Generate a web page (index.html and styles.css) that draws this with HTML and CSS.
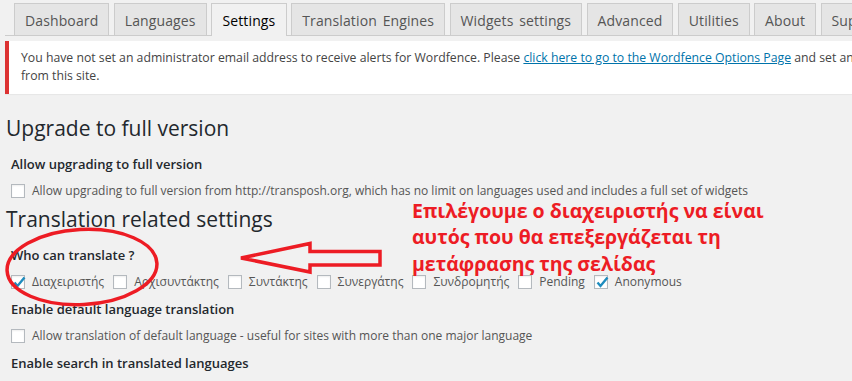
FILE: index.html
```html
<!DOCTYPE html>
<html lang="el">
<head>
    <meta charset="UTF-8">
    <meta name="viewport" content="width=device-width, initial-scale=1.0">
    <title>Transposh - Settings</title>
    <link rel="stylesheet" href="styles.css">
</head>
<body>
    <div class="wrap">
        <nav class="nav-tabs">
            <a class="nav-tab" href="#">Dashboard</a>
            <a class="nav-tab" href="#">Languages</a>
            <a class="nav-tab active" href="#">Settings</a>
            <a class="nav-tab" href="#">Translation Engines</a>
            <a class="nav-tab" href="#">Widgets settings</a>
            <a class="nav-tab" href="#">Advanced</a>
            <a class="nav-tab" href="#">Utilities</a>
            <a class="nav-tab" href="#">About</a>
            <a class="nav-tab" href="#">Support</a>
        </nav>

        <div class="notice">
            <p>You have not set an administrator email address to receive alerts for Wordfence. Please <a href="#">click here to go to the Wordfence Options Page</a> and set an email address where you will receive security alerts<br>from this site.</p>
        </div>

        <h2>Upgrade to full version</h2>
        <div class="field-title">Allow upgrading to full version</div>
        <div class="option-row">
            <label class="option"><span class="box"></span><span>Allow upgrading to full version from http://transposh.org, which has no limit on languages used and includes a full set of widgets</span></label>
        </div>

        <h2>Translation related settings</h2>
        <div class="field-title">Who can translate ?</div>
        <div class="option-row">
            <label class="option"><span class="box"><svg viewBox="0 0 14 14"><path d="M2.5 6.5L5.5 10L12.5 1.5"/></svg></span><span>Διαχειριστής</span></label>
            <label class="option"><span class="box"></span><span>Αρχισυντάκτης</span></label>
            <label class="option"><span class="box"></span><span>Συντάκτης</span></label>
            <label class="option"><span class="box"></span><span>Συνεργάτης</span></label>
            <label class="option"><span class="box"></span><span>Συνδρομητής</span></label>
            <label class="option"><span class="box"></span><span>Pending</span></label>
            <label class="option"><span class="box"><svg viewBox="0 0 14 14"><path d="M2.5 6.5L5.5 10L12.5 1.5"/></svg></span><span>Anonymous</span></label>
        </div>
        <div class="field-title">Enable default language translation</div>
        <div class="option-row">
            <label class="option"><span class="box"></span><span>Allow translation of default language - useful for sites with more than one major language</span></label>
        </div>
        <div class="field-title">Enable search in translated languages</div>
    </div>

    <!-- hand-drawn annotation on top of the screenshot -->
    <div class="annotation">
        Επιλέγουμε ο διαχειριστής να είναι<br>
        αυτός που θα επεξεργάζεται τη<br>
        μετάφρασης της σελίδας
    </div>

    <svg class="marks" width="852" height="381" viewBox="0 0 852 381">
        <ellipse cx="82" cy="267" rx="75" ry="37.5" transform="rotate(-3 82 267)"/>
        <polygon points="241,258 310,243.5 310,251.5 380,251.5 380,265 310,265 310,272"/>
    </svg>
</body>
</html>
```

FILE: styles.css
```css
html, body {
    overflow: hidden;
}
body {
    margin: 0;
    background: #f1f1f1;
    font-family: "Open Sans", "Noto Sans", sans-serif;
    font-size: 13px;
    color: #444;
}
.wrap {
    margin-left: 5px;
    padding-top: 3px;
    width: 1400px;
}
.nav-tabs {
    display: flex;
    gap: 4.4px;
    padding-left: 9px;
    border-bottom: 1px solid #ccc;
}
.nav-tab {
    border: 1px solid #ccc;
    border-bottom: none;
    background: #e5e5e5;
    color: #555;
    font-size: 14px;
    line-height: 23px;
    letter-spacing: 0.12px;
    word-spacing: 2px;
    padding: 5px 10px 3px;
    text-decoration: none;
    white-space: nowrap;
}
.nav-tab.active {
    background: #f1f1f1;
    color: #000;
    margin-bottom: -1px;
    padding: 5px 10.5px 4px;
}
.notice {
    margin: 5px 0 20px;
    background: #fff;
    border-left: 4px solid #dc3232;
    box-shadow: 0 1px 1px rgba(0, 0, 0, .04);
    padding: 8px 12px 9px;
}
.notice p {
    margin: 0;
    font-size: 12.25px;
    line-height: 18px;
    white-space: nowrap;
}
.notice a {
    color: #0073aa;
}
h2 {
    font-size: 21px;
    font-weight: 400;
    line-height: 28px;
    margin: 5px 0 13px 1px;
    color: #23282d;
}
.field-title {
    font-size: 13px;
    font-weight: 600;
    line-height: 18px;
    margin: 9px 0 0 6px;
    color: #23282d;
}
.option-row {
    display: flex;
    height: 18px;
    margin: 9px 0 0 6px;
}
.option {
    display: flex;
    align-items: center;
    gap: 7px;
    margin-right: 9px;
    font-size: 12px;
    line-height: 18px;
    color: #555;
    white-space: nowrap;
}
.box {
    position: relative;
    width: 14px;
    height: 14px;
    box-sizing: border-box;
    border: 1px solid #b4b9be;
    background: #fff;
    box-shadow: inset 0 1px 2px rgba(0, 0, 0, .07);
}
.box svg {
    position: absolute;
    left: 0;
    top: 0;
    width: 14px;
    height: 14px;
    fill: none;
    stroke: #1e8cbe;
    stroke-width: 2.4;
}
.annotation {
    position: absolute;
    left: 412px;
    top: 197.5px;
    font-size: 19.5px;
    font-weight: 700;
    line-height: 26.7px;
    color: #ed1c24;
    white-space: nowrap;
}
.marks {
    position: absolute;
    left: 0;
    top: 0;
    pointer-events: none;
}
.marks ellipse,
.marks polygon {
    fill: none;
    stroke: #ed1c24;
    stroke-width: 3.5;
}
```
